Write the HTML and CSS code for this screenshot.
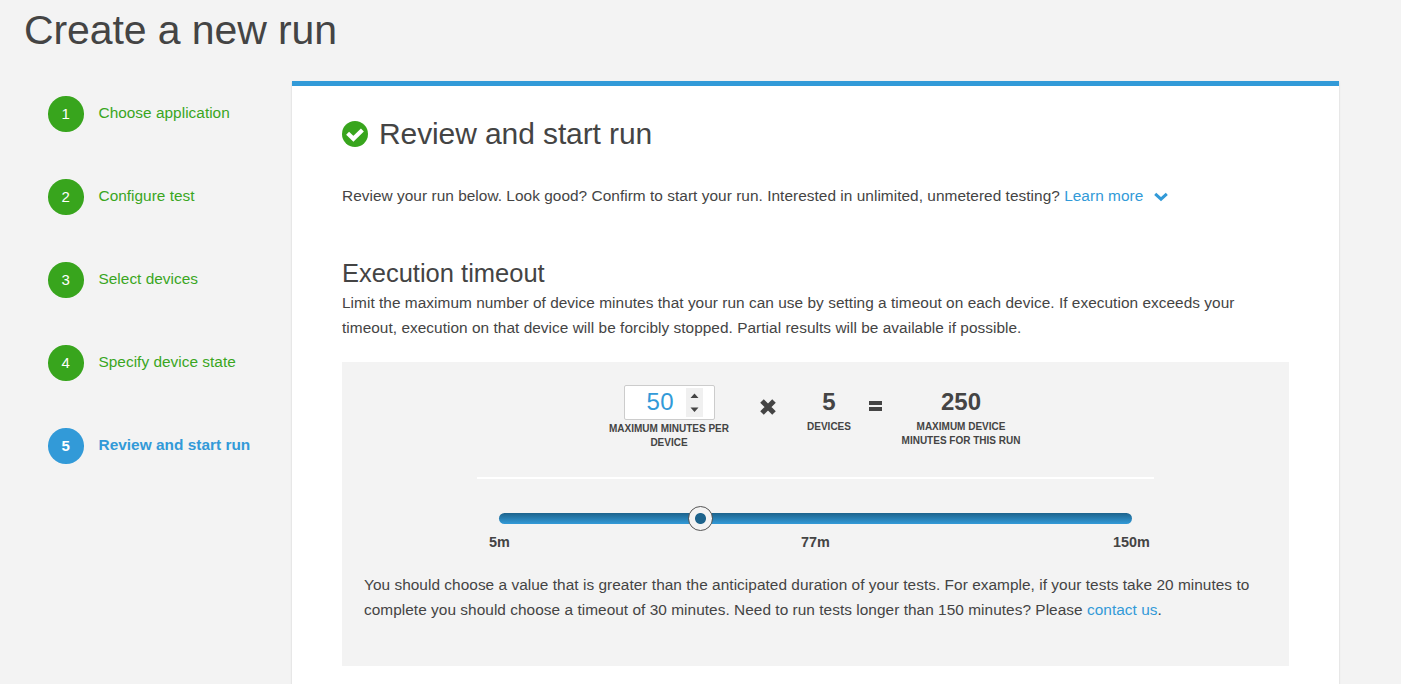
FILE: index.html
```html
<!DOCTYPE html>
<html lang="en">
<head>
<meta charset="utf-8">
<title>Create a new run</title>
<link rel="stylesheet" href="styles.css">
</head>
<body>
<h1 class="page-title">Create a new run</h1>
<div class="layout">
  <nav class="steps">
    <a class="step"><span class="num">1</span><span class="step-label">Choose application</span></a>
    <a class="step"><span class="num">2</span><span class="step-label">Configure test</span></a>
    <a class="step"><span class="num">3</span><span class="step-label">Select devices</span></a>
    <a class="step"><span class="num">4</span><span class="step-label">Specify device state</span></a>
    <a class="step current"><span class="num">5</span><span class="step-label">Review and start run</span></a>
  </nav>
  <main class="panel">
    <h2 class="heading">
      <svg class="check" viewBox="0 0 26 26"><circle cx="13" cy="13" r="13"/><path d="M5.6 12.2 L11.4 17.8 L20.4 9"/></svg>
      <span>Review and start run</span>
    </h2>
    <p class="text intro">Review your run below. Look good? Confirm to start your run. Interested in unlimited, unmetered testing? <a class="link">Learn more</a><svg class="chevron" viewBox="0 0 14 10"><path d="M1.2 1.8 L7 7.2 L12.8 1.8"/></svg></p>
    <h3 class="subheading">Execution timeout</h3>
    <p class="text limit">Limit the maximum number of device minutes that your run can use by setting a timeout on each device. If execution exceeds your<br>timeout, execution on that device will be forcibly stopped. Partial results will be available if possible.</p>
    <section class="box">
      <div class="formula">
        <div class="term minutes">
          <div class="field"><span class="field-value">50</span><span class="spinner"><svg viewBox="0 0 17 29"><path d="M4.5 10 L8.5 5.5 L12.5 10 Z M4.5 19.5 L8.5 24 L12.5 19.5 Z"/></svg></span></div>
          <div class="caption">MAXIMUM MINUTES PER<br>DEVICE</div>
        </div>
        <svg class="times" viewBox="0 0 18 18"><path d="M3 3 L15 15 M15 3 L3 15"/></svg>
        <div class="term devices"><div class="value">5</div><div class="caption">DEVICES</div></div>
        <div class="equals"></div>
        <div class="term total"><div class="value">250</div><div class="caption">MAXIMUM DEVICE<br>MINUTES FOR THIS RUN</div></div>
      </div>
      <div class="slider"><div class="knob"></div></div>
      <div class="scale"><span>5m</span><span>77m</span><span>150m</span></div>
      <p class="text note">You should choose a value that is greater than the anticipated duration of your tests. For example, if your tests take 20 minutes to<br>complete you should choose a timeout of 30 minutes. Need to run tests longer than 150 minutes? Please <a class="link">contact us</a>.</p>
    </section>
  </main>
</div>
</body>
</html>
```
FILE: styles.css
```css
* { box-sizing: border-box; }
body {
  margin: 0;
  height: 684px;
  overflow: hidden;
  background: #f3f3f3;
  color: #444;
  font: 15.4px/24px "Liberation Sans", Arial, sans-serif;
  letter-spacing: 0.02px;
}
h1, h2, h3, p { margin: 0; font-weight: 400; }
.page-title {
  padding: 7px 0 0 24px;
  height: 81px;
  font-size: 41px;
  line-height: 46px;
  letter-spacing: -0.1px;
}
.layout { display: flex; height: 603px; }
.steps { width: 292px; padding: 15px 0 0 48px; }
.step { display: flex; height: 83px; color: #3aa61e; white-space: nowrap; }
.num {
  width: 35.5px;
  height: 35.5px;
  margin-right: 15px;
  border-radius: 50%;
  background: #38a51d;
  color: #fff;
  font-size: 15px;
  line-height: 35px;
  text-align: center;
}
.step-label { line-height: 34px; }
.current { color: #329ad8; font-weight: 700; }
.current .num { background: #329ad8; }
.panel {
  width: 1047px;
  height: 620px;
  padding: 27px 50px 0;
  border-top: 5px solid #329ad8;
  background: #fff;
  box-shadow: 0 1px 2px rgba(0, 0, 0, 0.15);
  white-space: nowrap;
}
.heading {
  display: flex;
  align-items: center;
  gap: 11px;
  height: 42px;
  font-size: 30px;
  letter-spacing: -0.1px;
}
.check { width: 26px; height: 26px; fill: #38a51d; }
.check path { fill: none; stroke: #fff; stroke-width: 4.2; }
.text { letter-spacing: 0.042px; }
.intro { height: 67px; margin-top: 29px; }
.link { color: #329ad8; }
.chevron { width: 14px; height: 10px; margin-left: 11px; vertical-align: -1px; fill: none; stroke: #329ad8; stroke-width: 3; }
.subheading { height: 38px; margin-top: 2px; font-size: 25.5px; line-height: 40px; letter-spacing: 0; }
.limit { height: 71px; line-height: 24.5px; }
.box { height: 304px; padding: 23px 22px 0; background: #f3f3f3; }
.formula {
  display: flex;
  width: 677px;
  height: 94px;
  margin: 0 auto 34px;
  padding-left: 132px;
  border-bottom: 2px solid #fff;
}
.term { text-align: center; }
.minutes, .total { width: 120px; }
.devices { width: 46px; }
.field {
  display: flex;
  width: 91px;
  height: 35px;
  margin: 0 auto 2px;
  padding: 2px 11px 0 22px;
  border: 1px solid #ccc;
  border-radius: 2px;
  background: #fff;
  color: #329ad8;
  font-size: 24px;
  line-height: 27px;
  letter-spacing: 0.3px;
  justify-content: space-between;
}
.spinner { width: 17px; height: 29px; background: #f0f0f0; }
.spinner svg { display: block; fill: #444; }
.caption { font-size: 10px; line-height: 14px; font-weight: 700; letter-spacing: 0; }
.value { height: 35px; font-size: 24px; line-height: 34px; font-weight: 700; letter-spacing: 0; }
.times { width: 18px; height: 18px; margin: 13px 29px 0 30px; stroke: #444; stroke-width: 5; }
.equals { width: 13px; height: 10px; margin: 16px 19px 0 17px; border: solid #444; border-width: 4px 0; }
.slider {
  position: relative;
  width: 633px;
  height: 11px;
  margin: 0 auto;
  border-radius: 6px;
  background: linear-gradient(#1d638c, #329ad8);
}
.knob {
  position: absolute;
  left: 189px;
  top: -7px;
  width: 25px;
  height: 25px;
  border: 1.5px solid #555;
  border-radius: 50%;
  background: radial-gradient(circle, #1d638c 5px, #f3f3f3 6px);
}
.scale { display: flex; justify-content: space-between; width: 674px; height: 43px; margin: 6px auto 0; font-size: 14.4px; font-weight: 700; }
.scale span { width: 42px; text-align: center; }
.note { line-height: 24.5px; }
```
